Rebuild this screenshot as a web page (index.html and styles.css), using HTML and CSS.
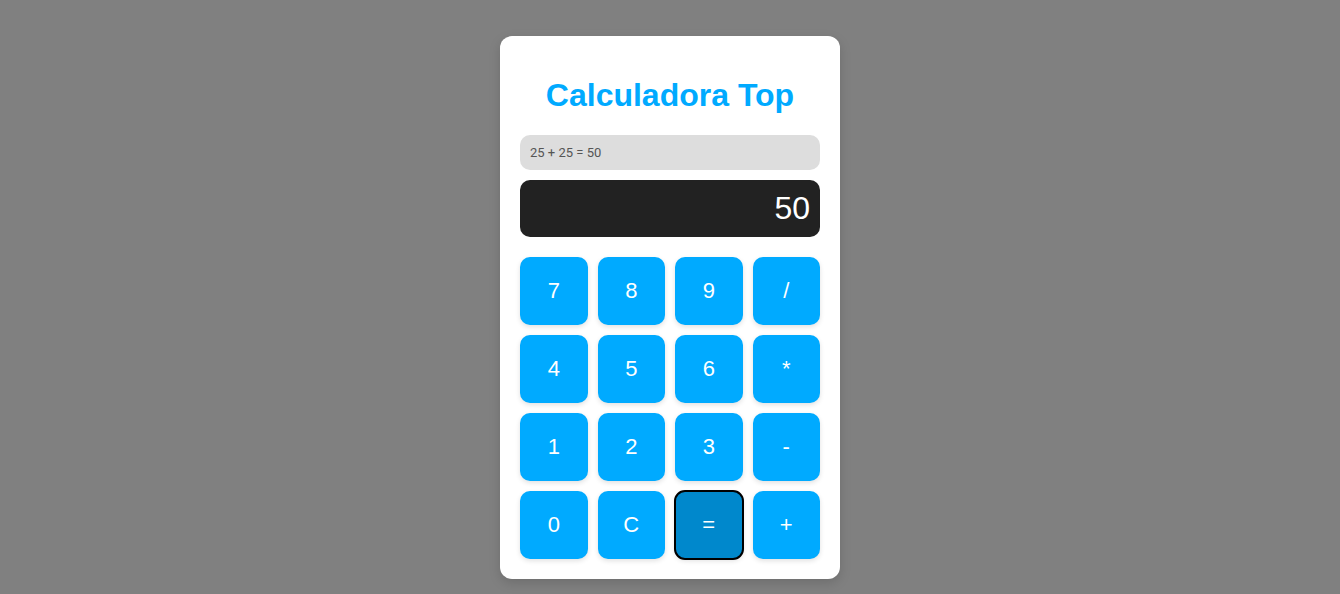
FILE: index.html
```html
<!DOCTYPE html>
<html lang="pt">
<head>
<meta charset="utf-8">
<title>Calculadora Top</title>
<link rel="stylesheet" href="styles.css">
</head>
<body>
<div class="calc">
  <h1 class="title">Calculadora Top</h1>
  <div class="history">25 + 25 = 50</div>
  <div class="display">50</div>
  <div class="keys">
    <button class="key">7</button>
    <button class="key">8</button>
    <button class="key">9</button>
    <button class="key">/</button>
    <button class="key">4</button>
    <button class="key">5</button>
    <button class="key">6</button>
    <button class="key">*</button>
    <button class="key">1</button>
    <button class="key">2</button>
    <button class="key">3</button>
    <button class="key">-</button>
    <button class="key">0</button>
    <button class="key">C</button>
    <button class="key key-active">=</button>
    <button class="key">+</button>
  </div>
</div>
</body>
</html>
```
FILE: styles.css
```css
html, body {
  margin: 0;
  height: 100%;
}
body {
  background: #808080;
  font-family: "Liberation Sans", Arial, sans-serif;
  display: flex;
  justify-content: center;
  align-items: flex-start;
  padding-top: 36px;
  box-sizing: border-box;
  overflow: hidden;
}
.calc {
  width: 300px;
  background: #fff;
  border-radius: 12px;
  padding: 20px;
  box-shadow: 0 4px 12px rgba(0,0,0,0.15);
}
.title {
  margin: 21px 0;
  font-size: 32px;
  line-height: 37px;
  text-align: center;
  color: #00aaff;
  font-weight: bold;
}
.history {
  background: #dddddd;
  color: #555;
  font-family: Roboto, "Liberation Sans", Arial, sans-serif;
  font-size: 13px;
  line-height: 15px;
  padding: 10px;
  border-radius: 10px;
  margin-bottom: 10px;
}
.display {
  background: #222222;
  color: #fff;
  font-size: 32px;
  line-height: 37px;
  padding: 10px;
  border-radius: 10px;
  text-align: right;
  margin-bottom: 20px;
}
.keys {
  display: grid;
  grid-template-columns: repeat(4, 1fr);
  gap: 10px;
}
.key {
  height: 68px;
  border: none;
  border-radius: 10px;
  background: #00aaff;
  color: #fff;
  font-family: "Liberation Sans", Arial, sans-serif;
  font-size: 22px;
  box-shadow: 0 2px 5px rgba(0,0,0,0.12);
  padding: 0;
}
.key-active {
  background: #0088cc;
  outline: 2px solid #000;
  outline-offset: -1px;
}
```
